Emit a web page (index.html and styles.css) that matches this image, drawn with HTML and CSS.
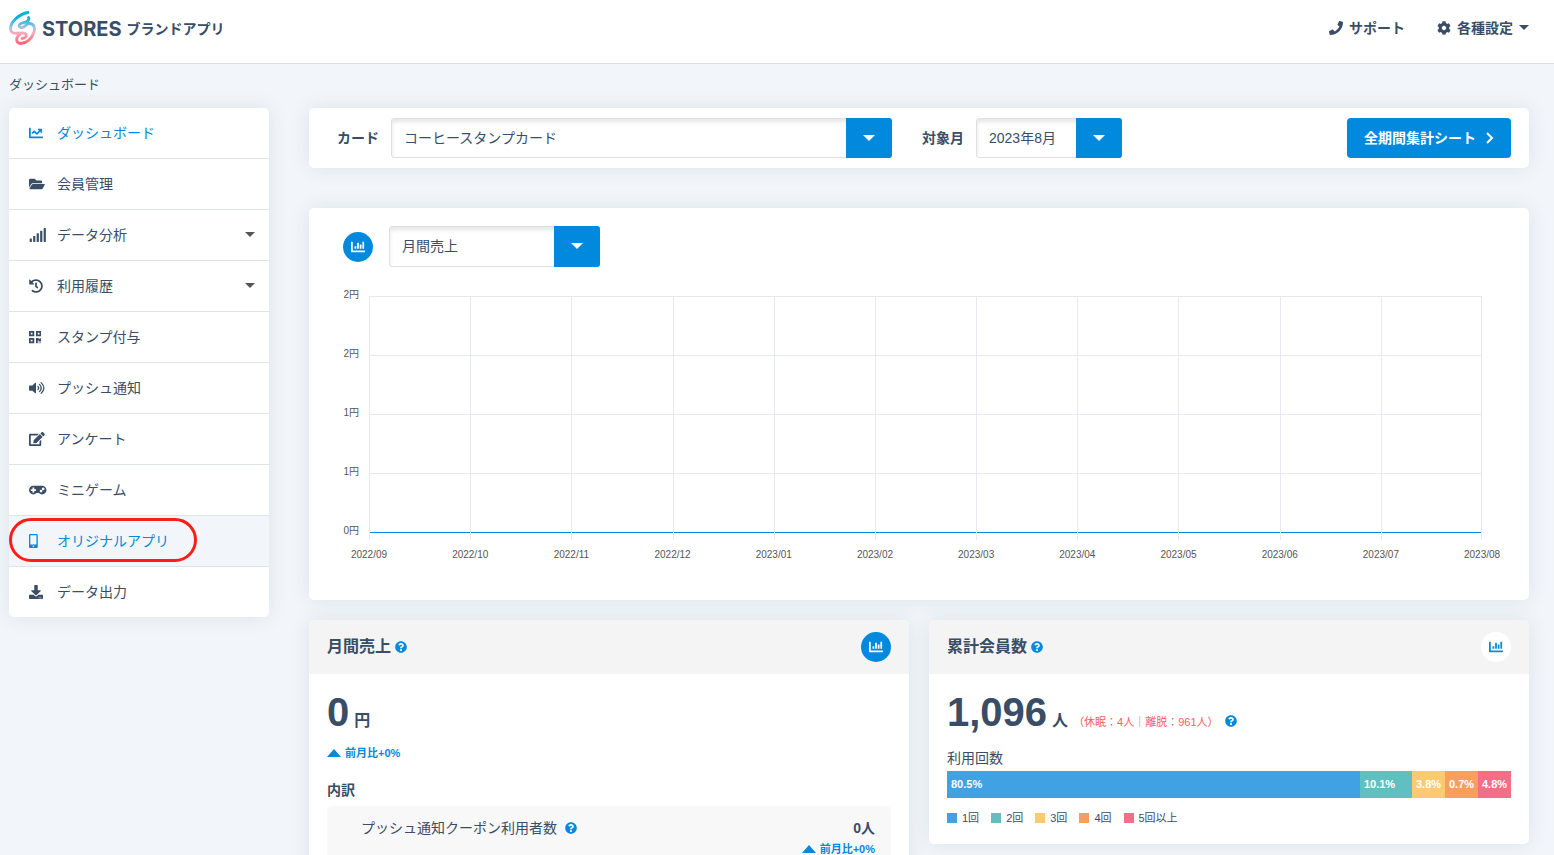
FILE: index.html
```
<!DOCTYPE html>
<html lang="ja">

<head>
    <meta charset="UTF-8">
    <meta name="viewport" content="width=device-width, initial-scale=1.0">
    <title>STORES ブランドアプリ</title>
    <link rel="stylesheet" href="styles.css">
</head>

<body>
    <svg class="sprite" aria-hidden="true">
        <symbol id="chart-bar" viewBox="0 0 512 512"><path d="M332.8 320h38.4c6.4 0 12.8-6.4 12.8-12.8V172.8c0-6.4-6.4-12.8-12.8-12.8h-38.4c-6.4 0-12.8 6.4-12.8 12.8v134.4c0 6.4 6.4 12.8 12.8 12.8zm96 0h38.4c6.4 0 12.8-6.4 12.8-12.8V76.8c0-6.4-6.4-12.8-12.8-12.8h-38.4c-6.4 0-12.8 6.4-12.8 12.8v230.4c0 6.4 6.4 12.8 12.8 12.8zm-288 0h38.4c6.4 0 12.8-6.4 12.8-12.8v-70.4c0-6.4-6.4-12.8-12.8-12.8h-38.4c-6.4 0-12.8 6.4-12.8 12.8v70.4c0 6.4 6.4 12.8 12.8 12.8zm96 0h38.4c6.4 0 12.8-6.4 12.8-12.8V108.8c0-6.4-6.4-12.8-12.8-12.8h-38.4c-6.4 0-12.8 6.4-12.8 12.8v198.4c0 6.4 6.4 12.8 12.8 12.8zM496 384H64V80c0-8.84-7.16-16-16-16H16C7.16 64 0 71.16 0 80v336c0 17.67 14.33 32 32 32h464c8.84 0 16-7.16 16-16v-32c0-8.84-7.16-16-16-16z"/></symbol>
        <symbol id="question" viewBox="0 0 512 512"><path d="M504 256c0 136.997-111.043 248-248 248S8 392.997 8 256C8 119.083 119.043 8 256 8s248 111.083 248 248zM262.655 90c-54.497 0-89.255 22.957-116.549 63.758-3.536 5.286-2.353 12.415 2.715 16.258l34.699 26.31c5.205 3.947 12.621 3.008 16.665-2.122 17.864-22.658 30.113-35.797 57.303-35.797 20.429 0 45.698 13.148 45.698 32.958 0 14.976-12.363 22.667-32.534 33.976C247.128 238.528 216 254.941 216 296v4c0 6.627 5.373 12 12 12h56c6.627 0 12-5.373 12-12v-1.333c0-28.462 83.186-29.647 83.186-106.667 0-58.002-60.165-102-116.531-102zM256 338c-25.365 0-46 20.635-46 46 0 25.364 20.635 46 46 46s46-20.636 46-46c0-25.365-20.635-46-46-46z"/></symbol>
    </svg>

    <header class="header">
        <a class="logo" href="#">
            <svg class="logo-mark" viewBox="8 10 30 36" fill="none" stroke="url(#mark)" stroke-width="2.8" stroke-linecap="round">
                <defs>
                    <linearGradient id="mark" gradientUnits="userSpaceOnUse" x1="0" y1="11" x2="0" y2="45">
                        <stop offset="0.2" stop-color="#00b4d8"/>
                        <stop offset="0.5" stop-color="#a9c3e2"/>
                        <stop offset="0.65" stop-color="#f9a9ba"/>
                        <stop offset="1" stop-color="#fb5a6c"/>
                    </linearGradient>
                </defs>
                <path d="M28 12.500C19 14 10.500 22 10.500 28.500C10.500 34 16 33.500 21 33C28 32 28 38 22 38.500"/>
                <path d="M28.500 17.500C30 21 26 22 22.500 23C18 24 18 28 22 27.500C26 27 26 23.500 29 23.500C34 23.500 35.500 28 34 32C32 39 26 43.500 20.500 43.500C15.500 43 15.500 37 20 34.500"/>
            </svg>
            <span class="logo-name">STORES</span>
            <span class="logo-sub">ブランドアプリ</span>
        </a>
        <nav class="header-nav">
            <a href="#">
                <svg class="icon" viewBox="0 0 512 512"><path d="M493.4 24.6l-104-24c-11.3-2.6-22.9 3.3-27.5 13.9l-48 112c-4.2 9.8-1.4 21.3 6.9 28l60.6 49.6c-36 76.7-98.9 140.500-177.200 177.200l-49.600-60.600c-6.800-8.300-18.200-11.100-28-6.900l-112 48C3.900 366.500-2 378.100.6 389.400l24 104C27.100 504.200 36.700 512 48 512c256.100 0 464-207.500 464-464 0-11.200-7.700-20.900-18.600-23.400z"/></svg>
                サポート
            </a>
            <a href="#">
                <svg class="icon" viewBox="0 0 512 512"><path d="M487.4 315.7l-42.6-24.6c4.3-23.2 4.3-47 0-70.2l42.6-24.6c4.9-2.8 7.1-8.6 5.5-14-11.1-35.6-30-67.8-54.7-94.6-3.8-4.1-10-5.1-14.8-2.3L380.8 110c-17.9-15.4-38.5-27.3-60.8-35.1V25.8c0-5.6-3.9-10.5-9.4-11.7-36.7-8.2-74.3-7.8-109.2 0-5.5 1.2-9.4 6.1-9.4 11.7V75c-22.2 7.9-42.8 19.8-60.8 35.1L88.7 85.5c-4.9-2.8-11-1.9-14.8 2.3-24.7 26.7-43.6 58.900-54.700 94.600-1.700 5.400.6 11.200 5.500 14L67.300 221c-4.300 23.200-4.300 47 0 70.200l-42.600 24.600c-4.900 2.800-7.100 8.600-5.500 14 11.100 35.600 30 67.800 54.700 94.600 3.800 4.100 10 5.100 14.800 2.300l42.600-24.600c17.900 15.400 38.500 27.300 60.800 35.100v49.200c0 5.600 3.900 10.500 9.400 11.700 36.700 8.200 74.300 7.800 109.200 0 5.500-1.200 9.400-6.100 9.400-11.700v-49.200c22.200-7.900 42.800-19.800 60.800-35.100l42.600 24.600c4.900 2.800 11 1.900 14.800-2.300 24.700-26.700 43.600-58.900 54.700-94.600 1.500-5.500-.7-11.300-5.600-14.100zM256 336c-44.100 0-80-35.900-80-80s35.900-80 80-80 80 35.900 80 80-35.900 80-80 80z"/></svg>
                各種設定
                <span class="caret"></span>
            </a>
        </nav>
    </header>

    <p class="breadcrumb">ダッシュボード</p>

    <div class="layout">
        <nav class="side">
            <ul>
                <li><a class="active" href="#">
                    <svg viewBox="0 0 512 512"><path d="M496 384H64V80c0-8.840-7.160-16-16-16H16C7.160 64 0 71.160 0 80v336c0 17.670 14.330 32 32 32h464c8.840 0 16-7.160 16-16v-32c0-8.840-7.160-16-16-16zM464 96H345.940c-21.380 0-32.090 25.850-16.970 40.970l32.400 32.400L288 242.750l-73.370-73.370c-12.500-12.500-32.760-12.500-45.250 0l-68.690 68.690c-6.250 6.250-6.250 16.380 0 22.630l22.620 22.620c6.250 6.250 16.380 6.250 22.630 0L192 237.250l73.370 73.370c12.500 12.500 32.760 12.500 45.250 0l96-96 32.400 32.400c15.120 15.120 40.970 4.410 40.970-16.970V112c.01-8.840-7.150-16-15.990-16z"/></svg>
                    ダッシュボード</a></li>
                <li><a href="#">
                    <svg viewBox="0 0 576 512"><path d="M572.694 292.093L500.270 416.248A63.997 63.997 0 0 1 444.989 448H45.025c-18.523 0-30.064-20.093-20.731-36.093l72.424-124.155A64 64 0 0 1 152 256h399.964c18.523 0 30.064 20.093 20.730 36.093zM152 224h328v-48c0-26.510-21.490-48-48-48H272l-64-64H48C21.490 64 0 85.490 0 112v278.046l69.077-118.418C86.214 242.250 117.989 224 152 224z"/></svg>
                    会員管理</a></li>
                <li><a href="#">
                    <svg viewBox="0 0 640 512"><path d="M216 288h-48c-8.840 0-16 7.160-16 16v192c0 8.840 7.160 16 16 16h48c8.840 0 16-7.160 16-16V304c0-8.840-7.160-16-16-16zM88 384H40c-8.840 0-16 7.160-16 16v96c0 8.840 7.160 16 16 16h48c8.840 0 16-7.160 16-16v-96c0-8.840-7.160-16-16-16zm256-192h-48c-8.840 0-16 7.160-16 16v288c0 8.840 7.160 16 16 16h48c8.840 0 16-7.160 16-16V208c0-8.840-7.160-16-16-16zm128-96h-48c-8.840 0-16 7.160-16 16v384c0 8.840 7.160 16 16 16h48c8.840 0 16-7.160 16-16V112c0-8.840-7.160-16-16-16zM600 0h-48c-8.840 0-16 7.160-16 16v480c0 8.840 7.160 16 16 16h48c8.840 0 16-7.160 16-16V16c0-8.840-7.160-16-16-16z"/></svg>
                    データ分析<span class="caret"></span></a></li>
                <li><a href="#">
                    <svg viewBox="0 0 512 512"><path d="M504 255.531c.253 136.640-111.180 248.372-247.820 248.468-59.015.042-113.223-20.530-155.822-54.911-11.077-8.940-11.905-25.541-1.839-35.607l11.267-11.267c8.609-8.609 22.353-9.551 31.891-1.984C173.062 425.135 212.781 440 256 440c101.705 0 184-82.311 184-184 0-101.705-82.311-184-184-184-48.814 0-93.149 18.969-126.068 49.932l50.754 50.754c10.080 10.080 2.941 27.314-11.313 27.314H24c-8.837 0-16-7.163-16-16V38.627c0-14.254 17.234-21.393 27.314-11.314l49.372 49.372C129.209 34.136 189.552 8 256 8c136.810 0 247.747 110.780 248 247.531zm-180.912 78.784l9.823-12.630c8.138-10.463 6.253-25.542-4.210-33.679L288 256.349V152c0-13.255-10.745-24-24-24h-16c-13.255 0-24 10.745-24 24v135.651l65.409 50.874c10.463 8.137 25.541 6.253 33.679-4.210z"/></svg>
                    利用履歴<span class="caret"></span></a></li>
                <li><a href="#">
                    <svg viewBox="0 0 448 512"><path d="M0 224h192V32H0v192zM64 96h64v64H64V96zm192-64v192h192V32H256zm128 128h-64V96h64v64zM0 480h192V288H0v192zm64-128h64v64H64v-64zm352-64h32v128h-96v-32h-32v96h-64V288h96v32h64v-32zm0 160h32v32h-32v-32zm-64 0h32v32h-32v-32z"/></svg>
                    スタンプ付与</a></li>
                <li><a href="#">
                    <svg viewBox="0 0 576 512"><path d="M215.030 71.050L126.060 160H24c-13.260 0-24 10.740-24 24v144c0 13.250 10.740 24 24 24h102.060l88.970 88.950c15.030 15.030 40.970 4.470 40.970-16.970V88.020c0-21.460-25.960-31.980-40.970-16.970z"/><path d="M325 196q58 60 0 120M384 124q128 132 0 264M444 58q204 198 0 396" fill="none" stroke="currentColor" stroke-width="46" stroke-linecap="round"/></svg>
                    プッシュ通知</a></li>
                <li><a href="#">
                    <svg viewBox="0 0 576 512"><path d="M402.600 83.200l90.200 90.200c3.800 3.800 3.800 10 0 13.800L274.400 405.600l-92.800 10.300c-12.400 1.400-22.900-9.100-21.500-21.500l10.300-92.800L388.800 83.200c3.800-3.800 10-3.800 13.800 0zm162-22.900l-48.800-48.800c-15.200-15.200-39.900-15.200-55.200 0l-35.400 35.400c-3.800 3.800-3.800 10 0 13.800l90.200 90.200c3.800 3.800 10 3.800 13.800 0l35.400-35.400c15.200-15.300 15.200-40 0-55.200zM384 346.200V448H64V128h229.800c3.200 0 6.200-1.300 8.500-3.500l40-40c7.600-7.600 2.200-20.500-8.500-20.500H48C21.500 64 0 85.500 0 112v352c0 26.500 21.500 48 48 48h352c26.500 0 48-21.500 48-48V306.200c0-10.700-12.900-16-20.500-8.500l-40 40c-2.200 2.300-3.500 5.300-3.500 8.500z"/></svg>
                    アンケート</a></li>
                <li><a href="#">
                    <svg viewBox="0 0 640 512"><path d="M480 96H160C71.600 96 0 167.600 0 256s71.600 160 160 160c44.800 0 85.200-18.400 114.200-48h91.500c29 29.600 69.500 48 114.200 48 88.400 0 160-71.600 160-160S568.400 96 480 96zM256 276c0 6.600-5.400 12-12 12h-52v52c0 6.600-5.400 12-12 12h-40c-6.600 0-12-5.400-12-12v-52H76c-6.600 0-12-5.400-12-12v-40c0-6.600 5.400-12 12-12h52v-52c0-6.600 5.400-12 12-12h40c6.600 0 12 5.400 12 12v52h52c6.600 0 12 5.400 12 12v40zm184 68c-26.500 0-48-21.500-48-48s21.500-48 48-48 48 21.500 48 48-21.500 48-48 48zm80-80c-26.500 0-48-21.500-48-48s21.500-48 48-48 48 21.500 48 48-21.500 48-48 48z"/></svg>
                    ミニゲーム</a></li>
                <li class="marked"><a class="active" href="#">
                    <svg viewBox="0 0 320 512"><path d="M272 0H48C21.500 0 0 21.500 0 48v416c0 26.500 21.500 48 48 48h224c26.500 0 48-21.500 48-48V48c0-26.500-21.500-48-48-48zM160 480c-17.700 0-32-14.300-32-32s14.300-32 32-32 32 14.300 32 32-14.300 32-32 32zm112-108c0 6.600-5.400 12-12 12H60c-6.600 0-12-5.400-12-12V60c0-6.600 5.400-12 12-12h200c6.600 0 12 5.400 12 12v312z"/></svg>
                    オリジナルアプリ</a></li>
                <li><a href="#">
                    <svg viewBox="0 0 512 512"><path d="M216 0h80c13.300 0 24 10.700 24 24v168h87.700c17.800 0 26.700 21.500 14.100 34.100L269.700 378.300c-7.500 7.500-19.800 7.500-27.300 0L90.100 226.100c-12.600-12.600-3.700-34.100 14.100-34.100H192V24c0-13.300 10.700-24 24-24zm296 376v112c0 13.300-10.700 24-24 24H24c-13.300 0-24-10.700-24-24V376c0-13.300 10.700-24 24-24h146.700l49 49c20.100 20.100 52.500 20.100 72.600 0l49-49H488c13.300 0 24 10.700 24 24zm-124 88c0-11-9-20-20-20s-20 9-20 20 9 20 20 20 20-9 20-20zm64 0c0-11-9-20-20-20s-20 9-20 20 9 20 20 20 20-9 20-20z"/></svg>
                    データ出力</a></li>
            </ul>
        </nav>

        <main class="main">
            <section class="card filter">
                <label for="card">カード</label>
                <div class="select select-card">
                    <select id="card"><option>コーヒースタンプカード</option></select>
                </div>
                <label for="month">対象月</label>
                <div class="select select-month">
                    <select id="month"><option>2023年8月</option></select>
                </div>
                <button class="btn" type="button">全期間集計シート
                    <svg viewBox="0 0 8 12" fill="none" stroke="currentColor" stroke-width="2"><path d="M1 1l5 5-5 5"/></svg>
                </button>
            </section>

            <section class="card graph">
                <div class="graph-head">
                    <span class="round round-on"><svg><use href="#chart-bar"/></svg></span>
                    <div class="select select-graph">
                        <select aria-label="グラフ"><option>月間売上</option></select>
                    </div>
                </div>
                <div class="chart">
                    <div class="y-axis">
                        <span>2円</span><span>2円</span><span>1円</span><span>1円</span><span>0円</span>
                    </div>
                    <div class="plot-area">
                        <div class="plot">
                            <i></i><i></i><i></i><i></i><i></i><i></i><i></i><i></i><i></i><i></i><i></i>
                        </div>
                        <div class="x-axis">
                            <span>2022/09</span><span>2022/10</span><span>2022/11</span><span>2022/12</span><span>2023/01</span><span>2023/02</span><span>2023/03</span><span>2023/04</span><span>2023/05</span><span>2023/06</span><span>2023/07</span><span>2023/08</span>
                        </div>
                    </div>
                </div>
            </section>

            <div class="panels">
                <section class="card panel">
                    <div class="panel-head">
                        <h2>月間売上</h2>
                        <svg class="help"><use href="#question"/></svg>
                        <button class="round round-on" type="button" aria-label="月間売上のグラフ"><svg><use href="#chart-bar"/></svg></button>
                    </div>
                    <div class="panel-body">
                        <p class="total"><strong>0</strong><b>円</b></p>
                        <p class="diff">前月比+0%</p>
                        <h3>内訳</h3>
                        <div class="detail">
                            <div class="detail-row">
                                <span>プッシュ通知クーポン利用者数</span>
                                <svg class="help"><use href="#question"/></svg>
                                <b>0人</b>
                            </div>
                            <p class="diff">前月比+0%</p>
                        </div>
                    </div>
                </section>

                <section class="card panel">
                    <div class="panel-head">
                        <h2>累計会員数</h2>
                        <svg class="help"><use href="#question"/></svg>
                        <button class="round" type="button" aria-label="累計会員数のグラフ"><svg><use href="#chart-bar"/></svg></button>
                    </div>
                    <div class="panel-body">
                        <p class="total"><strong>1,096</strong><b>人</b><span class="note">（休眠：4人｜離脱：961人）</span><svg class="help"><use href="#question"/></svg></p>
                        <p class="bar-title">利用回数</p>
                        <div class="bar">
                            <span class="c1" style="width: 80.5%">80.5%</span>
                            <span class="c2" style="width: 10.1%">10.1%</span>
                            <span class="c3" style="width: 3.8%">3.8%</span>
                            <span class="c4" style="width: 0.7%">0.7%</span>
                            <span class="c5" style="width: 4.8%">4.8%</span>
                        </div>
                        <ul class="legend">
                            <li><i class="c1"></i>1回</li>
                            <li><i class="c2"></i>2回</li>
                            <li><i class="c3"></i>3回</li>
                            <li><i class="c4"></i>4回</li>
                            <li><i class="c5"></i>5回以上</li>
                        </ul>
                    </div>
                </section>
            </div>
        </main>
    </div>
</body>

</html>
```

FILE: styles.css
```
*,
*::before,
*::after {
    box-sizing: border-box;
}

body {
    margin: 0;
    background-color: #f2f6fa;
    color: #394d66;
    font-family: "Liberation Sans", "Noto Sans CJK JP", sans-serif;
    font-size: 14px;
    line-height: 20px;
}

ul,
p,
h2,
h3 {
    margin: 0;
    padding: 0;
    list-style: none;
}

a {
    color: inherit;
    text-decoration: none;
}

svg {
    fill: currentColor;
}

.sprite {
    display: none;
}

.caret {
    border: 5px solid transparent;
    border-top-color: currentColor;
    border-bottom: 0;
}

.header {
    display: flex;
    justify-content: space-between;
    height: 64px;
    padding: 0 25px 8px 8px;
    align-items: center;
    background-color: #fff;
    border-bottom: 1px solid #d5dfe9;
}

.logo {
    display: flex;
    align-items: center;
}

.logo-mark {
    width: 30px;
    height: 36px;
    fill: none;
}

.logo-name {
    margin-left: 4px;
    padding-top: 3px;
    font-family: Inter, sans-serif;
    font-size: 20px;
    font-weight: 700;
}

.logo-sub {
    margin-left: 5px;
    padding-top: 3px;
    font-weight: 700;
}

.header-nav {
    display: flex;
    gap: 32px;
    font-weight: 700;
}

.header-nav a {
    display: flex;
    align-items: center;
    gap: 6px;
}

.icon {
    width: 14px;
    height: 14px;
}

.breadcrumb {
    padding: 11px 9px 13px;
    font-size: 13px;
}

.layout {
    display: flex;
    align-items: flex-start;
    gap: 40px;
    padding: 0 25px 20px 9px;
}

.side,
.card {
    background-color: #fff;
    border-radius: 5px;
    box-shadow: 0 0 20px rgba(40, 60, 90, 0.1);
}

.side {
    flex: 0 0 260px;
}

.side li + li {
    border-top: 1px solid #dde4e6;
}

.side a {
    display: grid;
    grid-template-columns: 28px 1fr auto;
    align-items: center;
    height: 50px;
    padding: 0 14px 1px 20px;
}

.side svg {
    height: 14px;
}

.side .caret {
    color: #555;
}

.side .active {
    color: #0089dd;
}

.side .marked {
    position: relative;
    background-color: #f2f6fa;
}

.marked::after {
    content: "";
    position: absolute;
    top: 2px;
    left: 0;
    width: 188px;
    height: 44px;
    border: 3px solid #fb1d16;
    border-radius: 22px;
}

.main {
    flex: 1;
    min-width: 0;
}

.filter {
    display: flex;
    align-items: center;
    height: 60px;
    padding: 0 18px 0 28px;
}

.filter label {
    margin-right: 12px;
    font-weight: 700;
}

.select {
    position: relative;
    height: 40px;
}

.select select {
    appearance: none;
    width: 100%;
    height: 100%;
    padding: 0 50px 1px 12px;
    border: 1px solid #e0e0e0;
    border-radius: 3px;
    background-color: #fff;
    box-shadow: inset 0 3px 4px rgba(0, 0, 0, 0.1);
    color: inherit;
    font: inherit;
}

.select::before {
    content: "";
    position: absolute;
    top: 0;
    right: 0;
    width: 46px;
    height: 100%;
    border-radius: 0 3px 3px 0;
    background-color: #0089dd;
    pointer-events: none;
}

.select::after {
    content: "";
    position: absolute;
    top: 17px;
    right: 17px;
    border: 6px solid transparent;
    border-top-color: #fff;
    border-bottom: 0;
    pointer-events: none;
}

.select-card {
    flex: 0 1 501px;
    margin-right: 30px;
}

.select-month {
    width: 146px;
}

.select-graph {
    width: 211px;
    height: 41px;
}

.btn {
    display: flex;
    align-items: center;
    gap: 10px;
    height: 40px;
    margin-left: auto;
    padding: 0 17px;
    border: 0;
    border-radius: 4px;
    background-color: #0089dd;
    color: #fff;
    font: inherit;
    font-weight: 700;
    cursor: pointer;
}

.btn svg {
    width: 8px;
    height: 12px;
    fill: none;
}

.graph {
    margin: 40px 0 20px;
    padding: 18px 47px 20px 34px;
}

.graph-head {
    display: flex;
    align-items: center;
    gap: 16px;
}

.round {
    display: flex;
    align-items: center;
    justify-content: center;
    width: 30px;
    height: 30px;
    padding: 0;
    border: 0;
    border-radius: 50%;
    background-color: #fff;
    color: #0089dd;
}

.round-on {
    background-color: #0089dd;
    color: #fff;
}

.round svg {
    width: 14px;
    height: 14px;
}

.chart {
    display: flex;
    margin-top: 29px;
    color: #555;
    font-size: 10px;
}

.y-axis {
    width: 26px;
    margin-top: -11px;
    padding-right: 10px;
    text-align: right;
}

.y-axis span {
    display: block;
    height: 59px;
}

.plot-area {
    flex: 1;
}

.plot {
    display: grid;
    grid-template-columns: repeat(11, 1fr);
    height: 244px;
    background-image: linear-gradient(#0089dd, #0089dd), repeating-linear-gradient(#e6e9ef 0 1px, transparent 1px 59px);
    background-position: 0 236px, 0 0;
    background-size: 100% 1px, 100% 237px;
    background-repeat: no-repeat;
}

.plot i {
    border-left: 1px solid #e6e9ef;
}

.plot i:last-child {
    border-right: 1px solid #e6e9ef;
}

.x-axis {
    display: flex;
    margin: 5px calc(100% / -22) 0;
}

.x-axis span {
    flex: 1;
    text-align: center;
}

.panels {
    display: grid;
    grid-template-columns: 1fr 1fr;
    align-items: start;
    gap: 20px;
}

.panel-head {
    display: flex;
    align-items: center;
    height: 54px;
    padding: 0 18px;
    border-radius: 5px 5px 0 0;
    background-color: #f4f4f4;
}

.panel-head h2 {
    font-size: 16px;
}

.help {
    width: 12px;
    height: 12px;
    margin-left: 4px;
    color: #0089dd;
}

.panel-head .round {
    margin-left: auto;
}

.panel-body {
    padding: 14px 18px 16px;
}

.total {
    display: flex;
    align-items: baseline;
    height: 48px;
    line-height: 48px;
}

.total strong {
    font-size: 40px;
}

.total b {
    margin-left: 5px;
    font-size: 16px;
}

.total .help {
    align-self: center;
    margin: 18px 0 0 6px;
}

.note {
    margin-left: 5px;
    color: #f85c68;
    font-size: 11px;
}

.diff {
    display: flex;
    align-items: center;
    gap: 4px;
    margin-top: 7px;
    color: #0089dd;
    font-size: 11px;
    font-weight: 700;
}

.diff::before {
    content: "";
    border: 7px solid transparent;
    border-bottom: 8px solid currentColor;
    border-top: 0;
}

.panel-body h3 {
    margin: 17px 0 6px;
    font-size: 14px;
}

.detail {
    padding: 12px 16px 12px 34px;
    border-radius: 5px;
    background-color: #f8f8f8;
}

.detail-row {
    display: flex;
    align-items: center;
}

.detail-row .help {
    margin-left: 8px;
}

.detail-row b {
    margin-left: auto;
}

.detail .diff {
    justify-content: flex-end;
    margin-top: 1px;
}

.bar-title {
    margin-top: 12px;
}

.bar {
    display: flex;
    margin-top: 3px;
    color: #fff;
    font-size: 11px;
    font-weight: 700;
    line-height: 27px;
}

.bar span {
    min-width: 33px;
    padding-left: 4px;
}

.legend {
    display: flex;
    gap: 12px;
    margin-top: 10px;
    font-size: 11px;
}

.legend li {
    display: flex;
    align-items: center;
}

.legend i {
    width: 10px;
    height: 10px;
    margin-right: 5px;
}

.c1 {
    background-color: #40a2e3;
}

.c2 {
    background-color: #60bfbf;
}

.c3 {
    background-color: #fdca72;
}

.c4 {
    background-color: #f99f5b;
}

.c5 {
    background-color: #f66d87;
}
```
